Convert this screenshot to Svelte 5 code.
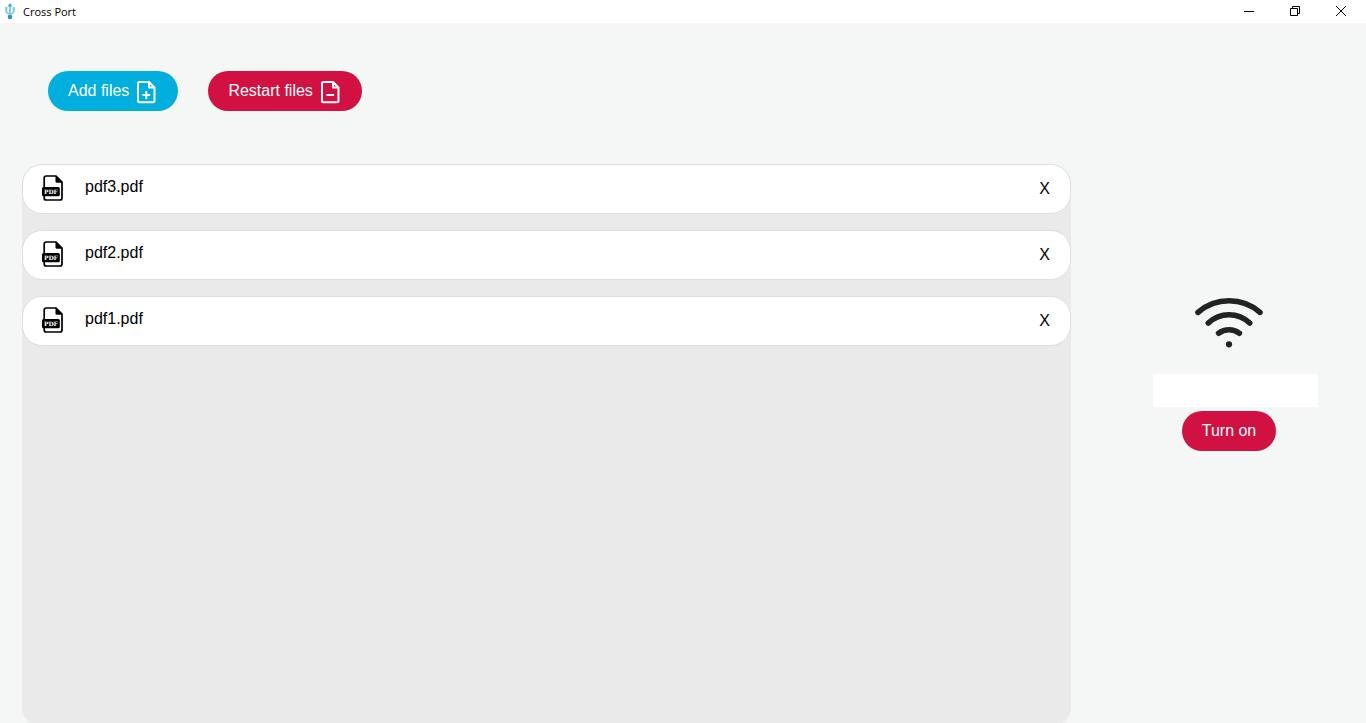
<script>
  let files = $state(['pdf3.pdf', 'pdf2.pdf', 'pdf1.pdf']);
  let address = $state('');

  function remove(name) {
    files = files.filter((file) => file !== name);
  }
</script>

<div class="window">
  <header class="titlebar">
    <svg class="app-icon" viewBox="0 0 12 18" aria-hidden="true">
      <path d="M6 3V15M2.2 6.5V9Q2.4 11.2 6 12.2Q9.6 11.2 9.8 9V6.5" fill="none" stroke="#7cc6e2" stroke-width="1.8" />
      <path d="M6 1 8.4 4.4H3.6Z" fill="#4aa8cd" />
      <rect x="1" y="5" width="2.6" height="2.8" fill="#8fd0e8" />
      <rect x="8.4" y="5" width="2.6" height="2.8" fill="#8fd0e8" />
      <circle cx="6" cy="15" r="2.3" fill="#2f93ba" />
    </svg>
    <span class="title">Cross Port</span>
    <div class="controls">
      <button class="control" aria-label="Minimize">
        <svg viewBox="0 0 12 12"><path d="M1 6.5H11" /></svg>
      </button>
      <button class="control" aria-label="Restore">
        <svg viewBox="0 0 12 12"><path d="M1.5 3.5H8.5V10.5H1.5ZM3.5 3.5V1.5H10.5V8.5H8.5" /></svg>
      </button>
      <button class="control" aria-label="Close">
        <svg viewBox="0 0 12 12"><path d="M1 1 11 11M11 1 1 11" /></svg>
      </button>
    </div>
  </header>

  <main>
    <section class="files">
      <div class="toolbar">
        <button class="pill blue">
          Add files
          <svg class="doc" viewBox="0 0 24 24" aria-hidden="true">
            <path d="M15 2H5.5A1.5 1.5 0 0 0 4 3.5V20.8A1.5 1.5 0 0 0 5.5 22.3H19A1.5 1.5 0 0 0 20.5 20.8V7.5L15 2V7.5H20.5" />
            <path d="M12.3 11.8V18.2M9.2 15H15.4" />
          </svg>
        </button>
        <button class="pill red">
          Restart files
          <svg class="doc" viewBox="0 0 24 24" aria-hidden="true">
            <path d="M15 2H5.5A1.5 1.5 0 0 0 4 3.5V20.8A1.5 1.5 0 0 0 5.5 22.3H19A1.5 1.5 0 0 0 20.5 20.8V7.5L15 2V7.5H20.5" />
            <path d="M9.2 15H15.4" />
          </svg>
        </button>
      </div>

      <ul class="list">
        {#each files as file (file)}
          <li>
            <svg class="pdf" viewBox="0 0 22 26" aria-hidden="true">
              <path d="M2.2 12V3Q2.2 1 4.2 1H14L20 7V23Q20 25 18 25H4.2Q2.2 25 2.2 23V21" fill="none" stroke="#000" stroke-width="1.7" />
              <path d="M13.5 0.5 20.8 7.8H15Q13.5 7.8 13.5 6.3Z" fill="#000" />
              <rect x="0" y="12" width="17.8" height="9.2" rx="1.5" fill="#000" />
              <text x="8.9" y="18.8" text-anchor="middle">PDF</text>
            </svg>
            <span class="name">{file}</span>
            <button class="remove" aria-label={`Remove ${file}`} onclick={() => remove(file)}>X</button>
          </li>
        {/each}
      </ul>
    </section>

    <aside>
      <svg class="wifi" viewBox="0 0 70 55" aria-hidden="true">
        <path d="M4 17.3A47.5 47.5 0 0 1 66 17.3M14.3 28A30 30 0 0 1 55.7 28M24.6 38.2A17.5 17.5 0 0 1 45.4 38.2" />
        <circle cx="35" cy="49.3" r="3.1" />
      </svg>
      <input type="text" aria-label="Address" bind:value={address} />
      <button class="pill red">Turn on</button>
    </aside>
  </main>
</div>

<style>
  :global(body) {
    margin: 0;
  }

  .window {
    display: flex;
    flex-direction: column;
    height: 100vh;
    overflow: hidden;
    background: #f5f7f7;
    color: #000;
    font: 16px/18px 'Liberation Sans', Arial, sans-serif;
  }

  button {
    padding: 0;
    border: 0;
    background: none;
    color: inherit;
    font: inherit;
    cursor: pointer;
  }

  .titlebar {
    display: flex;
    align-items: center;
    flex: none;
    box-sizing: border-box;
    height: 23px;
    padding: 0 0 2px 4px;
    background: #fff;
  }

  .app-icon {
    width: 12px;
    height: 18px;
  }

  .title {
    margin-left: 7px;
    padding-top: 2px;
    font: 11px/16px 'Open Sans', 'Noto Sans', sans-serif;
  }

  .controls {
    display: flex;
    margin-left: auto;
    padding-right: 2px;
  }

  .control {
    display: flex;
    align-items: center;
    justify-content: center;
    width: 46px;
    height: 20px;
  }

  .control svg {
    width: 12px;
    height: 12px;
    fill: none;
    stroke: #000;
    stroke-width: 1;
  }

  main {
    display: flex;
    flex: 1;
    gap: 21px;
    min-height: 0;
    padding-left: 22px;
  }

  .files {
    display: flex;
    flex: 1;
    flex-direction: column;
    min-width: 0;
  }

  .toolbar {
    display: flex;
    gap: 30px;
    padding: 48px 26px 53px;
  }

  .pill {
    display: flex;
    align-items: center;
    gap: 5px;
    height: 40px;
    padding: 0 20px;
    border-radius: 20px;
    color: #fff;
  }

  .blue {
    background: #00afdd;
  }

  .red {
    background: #d01142;
  }

  .doc {
    width: 24px;
    height: 24px;
    margin-top: 2px;
    fill: none;
    stroke: #fff;
    stroke-width: 2;
    stroke-linejoin: round;
    stroke-linecap: round;
  }

  .list {
    display: flex;
    flex: 1;
    flex-direction: column;
    gap: 16px;
    margin: 0 0 -4px;
    padding: 0;
    border-radius: 20px;
    background: #eaeaea;
    list-style: none;
  }

  li {
    display: flex;
    align-items: center;
    box-sizing: border-box;
    height: 50px;
    padding: 0 20px 0 19px;
    border: 1px solid #dedede;
    border-radius: 20px;
    background: #fff;
  }

  .pdf {
    width: 22px;
    height: 26px;
    margin-bottom: 3px;
  }

  .pdf text {
    fill: #fff;
    font: bold 6px 'DejaVu Serif', serif;
  }

  .name {
    flex: 1;
    margin-left: 21px;
    padding-bottom: 4px;
  }

  aside {
    display: flex;
    flex: none;
    flex-direction: column;
    align-items: center;
    justify-content: center;
    width: 274px;
  }

  .wifi {
    width: 70px;
    height: 55px;
    margin-bottom: 24px;
    fill: none;
    stroke: #212322;
    stroke-width: 5.6;
    stroke-linecap: round;
  }

  .wifi circle {
    fill: #212322;
    stroke: none;
  }

  input {
    box-sizing: border-box;
    width: 165px;
    height: 33px;
    margin: 0 0 4px 12px;
    padding: 0 8px;
    border: 0;
    background: #fff;
    font: inherit;
  }
</style>
